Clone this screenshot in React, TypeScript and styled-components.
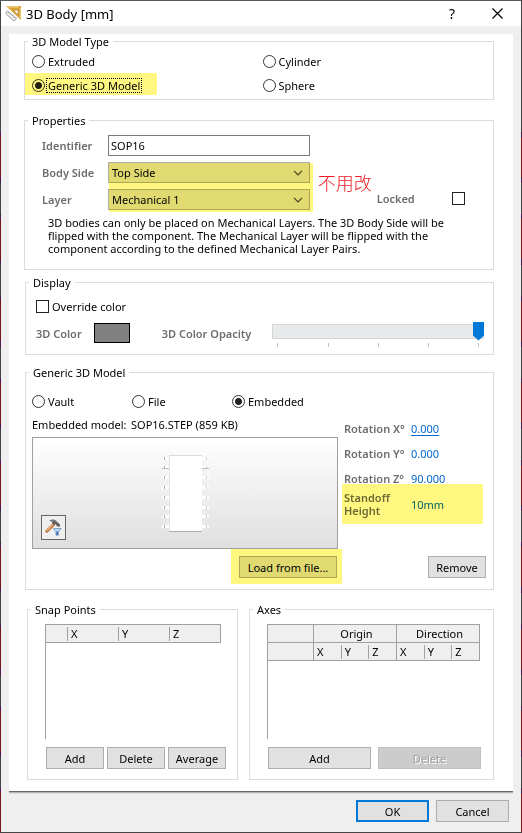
import React from "react";
import styled, { createGlobalStyle, css } from "styled-components";

const GlobalStyle = createGlobalStyle`
  *, *::before, *::after { box-sizing: border-box; }
  body {
    margin: 0;
    background: #efefef;
    color: #000;
    font: 11px/13px "Noto Sans", "Noto Sans CJK SC", sans-serif;
  }
  button, input, select { font: inherit; color: inherit; margin: 0; }
  p { margin: 0; }
`;

const edge = css`
  content: "";
  width: 1px;
  flex: none;
  background:
    linear-gradient(#444, #444) 0 0 / 1px 131px no-repeat,
    repeating-linear-gradient(#4a1a4c 0 5px, #7c161a 5px 45px, #4a1a4c 45px 51px, #444 51px 82px) 0 131px;
`;

const Window = styled.div`
  min-height: 100vh;
  display: flex;
  border-top: 1px solid #57575a;
  border-bottom: 1px solid #444;
  &::before { ${edge} }
  &::after { ${edge} }
`;

const WindowBody = styled.div`
  flex: 1;
  min-width: 0;
  display: flex;
  flex-direction: column;
`;

const TitleBar = styled.header`
  display: flex;
  align-items: center;
  height: 25px;
  padding: 0 12px 0 4px;
  background: #fff;
`;

const Title = styled.h1`
  flex: 1;
  margin: 0 0 0 4px;
  font-size: 13px;
  line-height: 18px;
  font-weight: 400;
`;

const TitleButton = styled.button`
  display: flex;
  align-items: center;
  justify-content: center;
  width: 24px;
  height: 24px;
  margin-left: 21px;
  padding: 0;
  border: 0;
  background: none;
  font-size: 14px;
`;

const Panel = styled.main`
  flex: 1;
  display: flex;
  flex-direction: column;
  margin: 8px 8px 0;
  padding: 0 19px 11px 15px;
  background: #fff;
  border-bottom: 1px solid #666;
  box-shadow: 0 1px 0 #b4b4b4, 0 2px 0 #dedede;
`;

const Group = styled.fieldset<{ $gap?: number; $indent?: number }>`
  min-width: 0;
  margin: ${(p) => p.$gap ?? 0}px 0 0 ${(p) => p.$indent ?? 0}px;
  padding: 0;
  border: 1px solid #dcdcdc;
`;

const Legend = styled.legend`
  margin-left: 3px;
  padding: 0 4px;
  line-height: 15px;
`;

const Marked = styled.div<{ $inset?: string }>`
  position: relative;
  display: grid;
  &::after {
    content: "";
    position: absolute;
    inset: ${(p) => p.$inset ?? "0"};
    background: #fff77f;
    mix-blend-mode: multiply;
    pointer-events: none;
  }
`;

const TypeGrid = styled.div`
  display: grid;
  grid-template-columns: 1fr 1fr;
  grid-auto-rows: 24px;
  padding: 0 0 2px 7px;
  align-items: center;
  justify-items: start;
`;

const ChoiceLabel = styled.label<{ $focus?: boolean }>`
  display: flex;
  align-items: center;
  height: 21px;
  span {
    margin-left: 2px;
    padding: 0 1px;
    outline: ${(p) => (p.$focus ? "1px dotted #000" : "none")};
  }
`;

const RadioInput = styled.input`
  appearance: none;
  width: 13px;
  height: 13px;
  border: 1px solid #333;
  border-radius: 50%;
  background: #fff;
  &:checked { background: radial-gradient(circle, #222 0 3px, #fff 4px); }
`;

const CheckInput = styled.input`
  appearance: none;
  flex: none;
  width: 13px;
  height: 13px;
  border: 1px solid #222;
  background: #fff;
  &:checked { background: #333; }
`;

const FieldLabel = styled.label`
  color: #6d6d6d;
  font-weight: 600;
`;

const PropertyGrid = styled.div`
  display: grid;
  grid-template-columns: 66px minmax(0, 11fr) minmax(0, 10fr);
  padding: 7px 0 0 17px;
`;

const LabelColumn = styled.div`
  display: grid;
  grid-auto-rows: 21px;
  gap: 6px;
  align-content: start;
  align-items: center;
`;

const FieldColumn = styled.div`
  display: grid;
  grid-template-rows: 21px 48px;
  gap: 6px;
  padding-bottom: 5px;
`;

const SideColumn = styled.div`
  display: flex;
  flex-direction: column;
  justify-content: flex-end;
`;

const SelectPair = styled(Marked)`
  gap: 6px;
`;

const TextInput = styled.input`
  width: 100%;
  height: 21px;
  padding: 0 2px;
  border: 1px solid #7a7a7a;
  background: #fff;
`;

const SelectFrame = styled.div`
  display: grid;
  grid-template-columns: minmax(0, 1fr) 16px;
  align-items: center;
  height: 21px;
  border: 1px solid #adadad;
  background: #e1e1e1;
  select {
    grid-area: 1 / 1 / 2 / 3;
    height: 19px;
    padding: 0 16px 0 3px;
    border: 0;
    background: none;
    appearance: none;
  }
  svg { grid-area: 1 / 2; pointer-events: none; }
`;

const Note = styled.p`
  padding-left: 8px;
  color: #ed1c24;
  font: 300 18px/20px "Noto Sans CJK SC", sans-serif;
`;

const LockedRow = styled.div`
  display: flex;
  align-items: center;
  justify-content: space-between;
  height: 13px;
  margin-bottom: 10px;
  padding: 0 28px 0 67px;
`;

const Hint = styled.p`
  max-width: 434px;
  padding: 1px 0 14px 23px;
`;

const DisplayBody = styled.div`
  padding: 6px 9px 5px 10px;
`;

const ColorRow = styled.div`
  display: flex;
  align-items: center;
  height: 32px;
`;

const Swatch = styled.input`
  appearance: none;
  width: 36px;
  height: 20px;
  margin: 0 32px 0 12px;
  padding: 0;
  border: 1px solid #000;
  background: #808080;
  &::-webkit-color-swatch-wrapper { padding: 0; }
  &::-webkit-color-swatch { border: 0; }
`;

const SliderBox = styled.div`
  flex: 1;
  margin-left: 21px;
  padding-top: 2px;
`;

const Slider = styled.input`
  appearance: none;
  display: block;
  width: 100%;
  height: 19px;
  background: linear-gradient(#e7eaea, #e7eaea) center / calc(100% - 2px) 13px no-repeat,
    linear-gradient(#d6d6d6, #d6d6d6) center / 100% 15px no-repeat;
  &::-webkit-slider-thumb {
    appearance: none;
    width: 11px;
    height: 19px;
    background: #0078d7;
    clip-path: polygon(0 0, 100% 0, 100% 74%, 50% 100%, 0 74%);
  }
`;

const Ticks = styled.div`
  display: flex;
  justify-content: space-between;
  padding: 2px 5px 0;
  i { width: 1px; height: 4px; background: #c0c0c0; }
`;

const SourceRow = styled.div`
  display: grid;
  grid-template-columns: 100px 100px 1fr;
  align-items: center;
  height: 26px;
  margin-top: 8px;
  padding-left: 6px;
`;

const ModelGrid = styled.div`
  display: grid;
  grid-template-columns: minmax(0, 306fr) minmax(0, 149fr);
  column-gap: 6px;
  padding: 2px 0 11px 6px;
`;

const ModelColumn = styled.div`
  display: flex;
  flex-direction: column;
`;

const ModelName = styled.p`
  display: grid;
  grid-template-columns: 99px 1fr;
  height: 21px;
  padding-top: 2px;
`;

const Preview = styled.div`
  display: grid;
  grid-template-columns: 41px 1fr 41px;
  height: 112px;
  margin-bottom: 7px;
  border: 1px solid #a0a0a0;
  background: linear-gradient(#fff, #dfdfdf);
  align-items: center;
  justify-items: center;
`;

const ToolButton = styled.button`
  display: flex;
  align-self: end;
  align-items: center;
  justify-content: center;
  width: 25px;
  height: 25px;
  margin-bottom: 8px;
  padding: 0;
  border: 1px solid #666;
  background: #efefef;
`;

const PushButton = styled.button<{ $primary?: boolean }>`
  height: 22px;
  padding: 0;
  border: ${(p) => (p.$primary ? "2px solid #0078d7" : "1px solid #adadad")};
  background: #e1e1e1;
  text-align: center;
  &:disabled {
    border-color: #bfbfbf;
    background: #ccc;
    color: #a0a0a0;
    text-shadow: 1px 1px 0 #fff;
  }
`;

const LoadMark = styled(Marked)`
  width: 98px;
  align-self: flex-end;
  margin-right: 1px;
`;

const Rotation = styled.div`
  display: grid;
  grid-template-columns: 67px 1fr;
  height: 25px;
  align-items: center;
`;

const Standoff = styled(Marked)`
  grid-template-columns: 67px 1fr;
  align-items: center;
  height: 26px;
`;

const ValueLink = styled.a<{ $active?: boolean }>`
  color: #0066cc;
  text-decoration: ${(p) => (p.$active ? "underline" : "none")};
  text-underline-offset: 2px;
`;

const RemoveRow = styled.div`
  display: grid;
  grid-template-columns: 58px;
  justify-content: end;
  margin-top: auto;
  padding-right: 7px;
`;

const PointsRow = styled.div`
  display: grid;
  grid-template-columns: minmax(0, 211fr) minmax(0, 245fr);
  gap: 11px;
  margin: 12px 0 0 3px;
`;

const GridFrame = styled.div<{ $margin: string }>`
  height: 115px;
  margin: ${(p) => p.$margin};
  border-left: 1px solid #a0a0a0;
`;

const HeaderTable = styled.table`
  width: 100%;
  table-layout: fixed;
  border-collapse: separate;
  border-spacing: 0;
  border-top: 1px solid #a0a0a0;
  border-right: 1px solid #a0a0a0;
`;

const HeadCell = styled.th<{ $rule?: "short" | "full"; $center?: boolean }>`
  height: 18px;
  padding: 0 0 0 4px;
  border-bottom: 1px solid #a0a0a0;
  background: ${(p) =>
    p.$rule === "short"
      ? "linear-gradient(#a0a0a0, #a0a0a0) 0 50% / 1px 14px no-repeat, #efefef"
      : p.$rule === "full"
        ? "linear-gradient(#a0a0a0, #a0a0a0) 0 0 / 1px 100% no-repeat, #efefef"
        : "#efefef"};
  font-weight: 400;
  line-height: 16px;
  text-align: ${(p) => (p.$center ? "center" : "left")};
`;

const ButtonRow = styled.div<{ $columns: number; $gap: number; $margin: string }>`
  display: grid;
  grid-template-columns: repeat(${(p) => p.$columns}, minmax(0, 1fr));
  gap: ${(p) => p.$gap}px;
  margin: ${(p) => p.$margin};
`;

const Footer = styled.footer`
  display: grid;
  grid-template-columns: 73px 73px;
  justify-content: end;
  gap: 7px;
  padding: 8px 12px 10px;
`;

const RulerIcon = () => (
  <svg width="17" height="17" viewBox="0 0 17 17" aria-hidden="true">
    <path d="M1 1H16V15Z" fill="#d9a43a" />
    <path d="M8.500 5H13V10Z" fill="#fff" stroke="#a87518" strokeWidth=".6" />
    <path d="M3 1V3M5 1V2.500M7 1V3M9 1V2.500M11 1V3M13 1V2.500M16 4H14.500M16 6H15M16 8H14.500M16 10H15M16 12H14.500" stroke="#fff3c4" strokeWidth=".8" />
    <path d="M2.500 6L11.500 13.500L9 16.200L.7 8.500Z" fill="#eee" stroke="#888" strokeWidth=".8" />
    <path d="M3 8L4 7M5 9.500L6 8.700M7 11.200L8 10.200M9 12.800L10 12" stroke="#777" strokeWidth=".7" />
  </svg>
);

const CloseIcon = () => (
  <svg width="11" height="11" viewBox="0 0 11 11" aria-hidden="true">
    <path d="M.5 .5L10.500 10.500M10.500 .5L.5 10.500" stroke="#000" strokeWidth="1.200" />
  </svg>
);

const Chevron = () => (
  <svg width="10" height="6" viewBox="0 0 10 6" aria-hidden="true">
    <path d="M1 .8L5 4.800L9 .8" fill="none" stroke="#444" strokeWidth="1.200" />
  </svg>
);

const HammerIcon = () => (
  <svg width="17" height="17" viewBox="0 0 17 17" aria-hidden="true">
    <path d="M1.800 12.200L8.500 5.600" stroke="#b86d34" strokeWidth="3" strokeLinecap="round" />
    <path d="M2 11.600L8.300 5.200" stroke="#f2b77c" strokeWidth="1.300" strokeLinecap="round" />
    <path d="M4.200 1.800C6.500 .3 9 .2 10.800 1.500L15 5.500L14.800 7.800L12.500 7.500L9.800 4.600L8.600 6L6.800 4.200L7.800 2.900Z" fill="#5c5c5c" />
    <path d="M6 1.600C8 1 9.500 1.200 10.500 2L14 5.500" fill="none" stroke="#999" strokeWidth=".7" />
    <path d="M8.300 9.500H16.200L13.400 12.800V16.200H11V12.800Z" fill="#bcd8f3" stroke="#6d93bd" strokeWidth=".8" />
    <path d="M12.200 12.500V16" stroke="#3568b6" strokeWidth="1.500" />
  </svg>
);

const pinTops = [4, 13, 23, 33, 43, 53, 62, 72];

const ChipDrawing = () => (
  <svg width="47" height="80" viewBox="0 0 47 80" shapeRendering="crispEdges" role="img" aria-label="SOP16 model">
    <rect x="4" y="3" width="39" height="74" fill="#efefef" opacity=".5" />
    {pinTops.map((y, i) => (
      <g key={y}>
        <rect x="0" y={y} width="7" height="3" fill="#fff" />
        <rect x="40" y={y} width="7" height="3" fill="#fff" />
        <rect x="2" y={y} width="1" height="3" fill="#aaa" />
        <rect x="44" y={y} width="1" height="3" fill="#ccc" />
        {i === 1 && <path d="M0 15.500H7M40 15.500H47" stroke="#bbb" />}
      </g>
    ))}
    <rect x="7" y="2" width="33" height="77" fill="#fff" />
    <path d="M7.500 2V78" stroke="#e6e6e6" />
    <path d="M7 2.500H40" stroke="#dcdcdc" />
    <path d="M7 78.500H40" stroke="#aaa" />
  </svg>
);

type ChoiceProps = { name: string; text: string; on?: boolean; focus?: boolean };

const Radio = ({ name, text, on, focus }: ChoiceProps) => (
  <ChoiceLabel $focus={focus}>
    <RadioInput type="radio" name={name} defaultChecked={on} />
    <span>{text}</span>
  </ChoiceLabel>
);

const DropDown = ({ id, value }: { id: string; value: string }) => (
  <SelectFrame>
    <select id={id} defaultValue={value}>
      <option>{value}</option>
    </select>
    <Chevron />
  </SelectFrame>
);

const rotations = [
  { axis: "X", value: "0.000", active: true },
  { axis: "Y", value: "0.000", active: false },
  { axis: "Z", value: "90.000", active: false },
];

export default function App() {
  return (
    <>
      <GlobalStyle />
      <Window>
        <WindowBody>
          <TitleBar>
            <RulerIcon />
            <Title>3D Body [mm]</Title>
            <TitleButton type="button" aria-label="Help">?</TitleButton>
            <TitleButton type="button" aria-label="Close"><CloseIcon /></TitleButton>
          </TitleBar>

          <Panel>
            <Group>
              <Legend>3D Model Type</Legend>
              <TypeGrid>
                <Radio name="type" text="Extruded" />
                <Radio name="type" text="Cylinder" />
                <Marked $inset="-2px -16px 1px -7px">
                  <Radio name="type" text="Generic 3D Model" on focus />
                </Marked>
                <Radio name="type" text="Sphere" />
              </TypeGrid>
            </Group>

            <Group $gap={13}>
              <Legend>Properties</Legend>
              <PropertyGrid>
                <LabelColumn>
                  <FieldLabel htmlFor="identifier">Identifier</FieldLabel>
                  <FieldLabel htmlFor="side">Body Side</FieldLabel>
                  <FieldLabel htmlFor="layer">Layer</FieldLabel>
                </LabelColumn>
                <FieldColumn>
                  <TextInput id="identifier" type="text" defaultValue="SOP16" />
                  <SelectPair $inset="1px -3px -2px 1px">
                    <DropDown id="side" value="Top Side" />
                    <DropDown id="layer" value="Mechanical 1" />
                  </SelectPair>
                </FieldColumn>
                <SideColumn>
                  <Note lang="zh">不用改</Note>
                  <LockedRow>
                    <FieldLabel htmlFor="locked">Locked</FieldLabel>
                    <CheckInput id="locked" type="checkbox" />
                  </LockedRow>
                </SideColumn>
              </PropertyGrid>
              <Hint>
                3D bodies can only be placed on Mechanical Layers. The 3D Body Side will be
                flipped with the component. The Mechanical Layer will be flipped with the
                component according to the defined Mechanical Layer Pairs.
              </Hint>
            </Group>

            <Group $gap={5} $indent={1}>
              <Legend>Display</Legend>
              <DisplayBody>
                <ChoiceLabel>
                  <CheckInput type="checkbox" />
                  <span>Override color</span>
                </ChoiceLabel>
                <ColorRow>
                  <FieldLabel htmlFor="color">3D Color</FieldLabel>
                  <Swatch id="color" type="color" defaultValue="#808080" />
                  <FieldLabel htmlFor="opacity">3D Color Opacity</FieldLabel>
                  <SliderBox>
                    <Slider id="opacity" type="range" min={0} max={100} defaultValue={100} />
                    <Ticks><i /><i /><i /><i /><i /></Ticks>
                  </SliderBox>
                </ColorRow>
              </DisplayBody>
            </Group>

            <Group $gap={10} $indent={1}>
              <Legend>Generic 3D Model</Legend>
              <SourceRow>
                <Radio name="source" text="Vault" />
                <Radio name="source" text="File" />
                <Radio name="source" text="Embedded" on />
              </SourceRow>
              <ModelGrid>
                <ModelColumn>
                  <ModelName>
                    <span>Embedded model:</span>
                    <span>SOP16.STEP (859 KB)</span>
                  </ModelName>
                  <Preview>
                    <ToolButton type="button" aria-label="Model options"><HammerIcon /></ToolButton>
                    <ChipDrawing />
                  </Preview>
                  <LoadMark $inset="-7px -5px -6px -8px">
                    <PushButton type="button">Load from file...</PushButton>
                  </LoadMark>
                </ModelColumn>
                <ModelColumn>
                  {rotations.map((r) => (
                    <Rotation key={r.axis}>
                      <FieldLabel as="span">Rotation {r.axis}°</FieldLabel>
                      <ValueLink href="#" $active={r.active}>{r.value}</ValueLink>
                    </Rotation>
                  ))}
                  <Standoff $inset="-7px 10px -7px -2px">
                    <FieldLabel as="span">Standoff<br />Height</FieldLabel>
                    <ValueLink href="#">10mm</ValueLink>
                  </Standoff>
                  <RemoveRow>
                    <PushButton type="button">Remove</PushButton>
                  </RemoveRow>
                </ModelColumn>
              </ModelGrid>
            </Group>

            <PointsRow>
              <Group>
                <Legend>Snap Points</Legend>
                <GridFrame $margin="7px 16px 8px 17px">
                  <HeaderTable aria-label="Snap Points">
                    <colgroup><col width="21" /><col /><col /><col /></colgroup>
                    <thead>
                      <tr>
                        <HeadCell />
                        <HeadCell $rule="short">X</HeadCell>
                        <HeadCell $rule="short">Y</HeadCell>
                        <HeadCell $rule="short">Z</HeadCell>
                      </tr>
                    </thead>
                  </HeaderTable>
                </GridFrame>
                <ButtonRow $columns={3} $gap={3} $margin="0 11px 10px 18px">
                  <PushButton type="button">Add</PushButton>
                  <PushButton type="button">Delete</PushButton>
                  <PushButton type="button">Average</PushButton>
                </ButtonRow>
              </Group>

              <Group>
                <Legend>Axes</Legend>
                <GridFrame $margin="7px 13px 8px 17px">
                  <HeaderTable aria-label="Axes">
                    <colgroup><col width="45" /><col /><col /><col /><col /><col /><col /></colgroup>
                    <thead>
                      <tr>
                        <HeadCell />
                        <HeadCell colSpan={3} $rule="full" $center>Origin</HeadCell>
                        <HeadCell colSpan={3} $rule="full" $center>Direction</HeadCell>
                      </tr>
                      <tr>
                        <HeadCell />
                        {["X", "Y", "Z", "X", "Y", "Z"].map((axis, i) => (
                          <HeadCell key={i} $rule={axis === "X" ? "full" : "short"}>{axis}</HeadCell>
                        ))}
                      </tr>
                    </thead>
                  </HeaderTable>
                </GridFrame>
                <ButtonRow $columns={2} $gap={7} $margin="0 12px 10px 18px">
                  <PushButton type="button">Add</PushButton>
                  <PushButton type="button" disabled>Delete</PushButton>
                </ButtonRow>
              </Group>
            </PointsRow>
          </Panel>

          <Footer>
            <PushButton type="button" $primary>OK</PushButton>
            <PushButton type="button">Cancel</PushButton>
          </Footer>
        </WindowBody>
      </Window>
    </>
  );
}
